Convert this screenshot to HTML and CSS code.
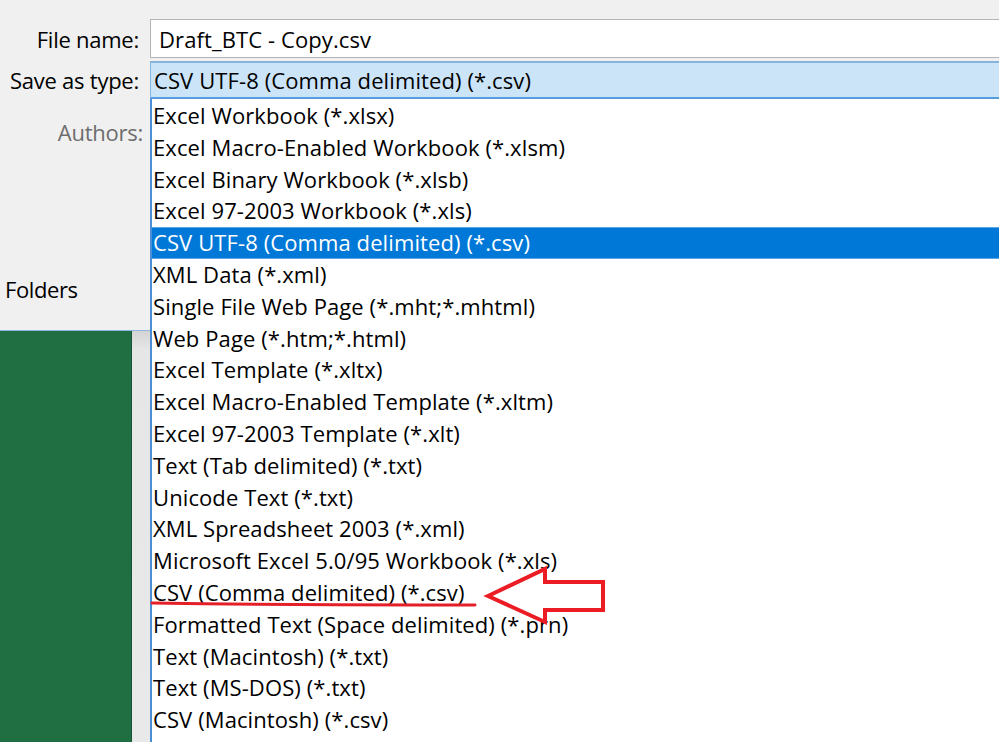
FILE: index.html
```html
<!DOCTYPE html>
<html>
<head>
<meta charset="utf-8">
<link rel="stylesheet" href="styles.css">
</head>
<body>
<div class="page">
  <div class="left">
    <div class="dialog-left">
      <div class="label row-file">File name:</div>
      <div class="label row-type">Save as type:</div>
      <div class="label muted row-authors">Authors:</div>
      <div class="folders"><span>Folders</span></div>
    </div>
    <div class="below">
      <div class="green"></div>
      <div class="strip"></div>
    </div>
  </div>
  <div class="right">
    <div class="input">Draft_BTC - Copy.csv</div>
    <div class="combo">CSV UTF-8 (Comma delimited) (*.csv)</div>
    <div class="list">
      <div class="item">Excel Workbook (*.xlsx)</div>
      <div class="item">Excel Macro-Enabled Workbook (*.xlsm)</div>
      <div class="item">Excel Binary Workbook (*.xlsb)</div>
      <div class="item">Excel 97-2003 Workbook (*.xls)</div>
      <div class="item selected">CSV UTF-8 (Comma delimited) (*.csv)</div>
      <div class="item">XML Data (*.xml)</div>
      <div class="item">Single File Web Page (*.mht;*.mhtml)</div>
      <div class="item">Web Page (*.htm;*.html)</div>
      <div class="item">Excel Template (*.xltx)</div>
      <div class="item">Excel Macro-Enabled Template (*.xltm)</div>
      <div class="item">Excel 97-2003 Template (*.xlt)</div>
      <div class="item">Text (Tab delimited) (*.txt)</div>
      <div class="item">Unicode Text (*.txt)</div>
      <div class="item">XML Spreadsheet 2003 (*.xml)</div>
      <div class="item">Microsoft Excel 5.0/95 Workbook (*.xls)</div>
      <div class="item">CSV (Comma delimited) (*.csv)</div>
      <div class="item">Formatted Text (Space delimited) (*.prn)</div>
      <div class="item">Text (Macintosh) (*.txt)</div>
      <div class="item">Text (MS-DOS) (*.txt)</div>
      <div class="item">CSV (Macintosh) (*.csv)</div>
      <svg class="annot" width="848" height="642" viewBox="150 100 848 642" xmlns="http://www.w3.org/2000/svg">
        <path d="M152 604 Q 310 606.5 475 606" fill="none" stroke="#e41f28" stroke-width="3" stroke-linecap="round"/>
        <path d="M488 597 L545 570 L545 583 L603 583 L603 611 L545 611 L545 623 Z" fill="none" stroke="#ec1c24" stroke-width="4" stroke-linejoin="miter"/>
      </svg>
    </div>
  </div>
</div>
</body>
</html>
```

FILE: styles.css
```css
html, body {
  margin: 0;
  padding: 0;
  width: 999px;
  height: 742px;
  overflow: hidden;
  background: #f0f0f0;
  font-family: "Open Sans", "Noto Sans", sans-serif;
  font-size: 22px;
  letter-spacing: 0.1px;
  color: #000;
}

.page {
  display: flex;
  width: 999px;
  height: 742px;
}

.left {
  width: 150px;
  flex: none;
  display: flex;
  flex-direction: column;
}

.dialog-left {
  background: #f0f0f0;
  border-bottom: 1px solid #8fb6e0;
  display: flex;
  flex-direction: column;
  padding-top: 19px;
  box-sizing: content-box;
  height: 311px;
}

.label {
  display: flex;
  align-items: center;
  justify-content: flex-end;
  padding-right: 11px;
  white-space: nowrap;
  letter-spacing: -0.25px;
}

.row-file { height: 39px; }
.row-type { height: 38px; margin-top: 3px; }
.row-authors { height: 28px; margin-top: 19px; padding-right: 7px; }
.muted { color: #6d6d6d; }

.folders {
  margin-top: 129px;
  height: 28px;
  padding-left: 5px;
  display: flex;
  align-items: center;
  white-space: nowrap;
  letter-spacing: -0.4px;
}

.below {
  flex: 1;
  display: flex;
}

.green {
  width: 131px;
  background: #1f6f43;
  border-right: 1px solid #17553a;
}

.strip {
  flex: 1;
  background: linear-gradient(to bottom, #d4d4d4 0px, #e6e6e6 18px, #e9e9e9 100%);
}

.right {
  flex: 1;
  display: flex;
  flex-direction: column;
  padding-top: 19px;
  min-width: 0;
}

.input {
  height: 39px;
  box-sizing: border-box;
  background: #fff;
  border: 1px solid #b4b4b4;
  border-right: none;
  padding-left: 8px;
  display: flex;
  align-items: center;
  white-space: nowrap;
}

.combo {
  margin-top: 3px;
  height: 38px;
  box-sizing: border-box;
  background: #cce4f7;
  border-top: 2px solid #86b4de;
  border-bottom: 2px solid #569de0;
  border-left: 1px solid #86b4de;
  padding-left: 3px;
  display: flex;
  align-items: center;
  white-space: nowrap;
}

.list {
  position: relative;
  flex: 1;
  background: #fff;
  border-left: 2px solid #4a8fd6;
  padding-top: 1px;
}

.item {
  height: 31.8px;
  line-height: 31.8px;
  padding-left: 1px;
  white-space: nowrap;
}

.item.selected {
  background: #0078d7;
  color: #fff;
  box-shadow: inset 0 1px 0 #5aa6e4, inset 0 -1px 0 #5aa6e4;
}

.annot {
  position: absolute;
  left: -2px;
  top: 0;
  pointer-events: none;
}
```
